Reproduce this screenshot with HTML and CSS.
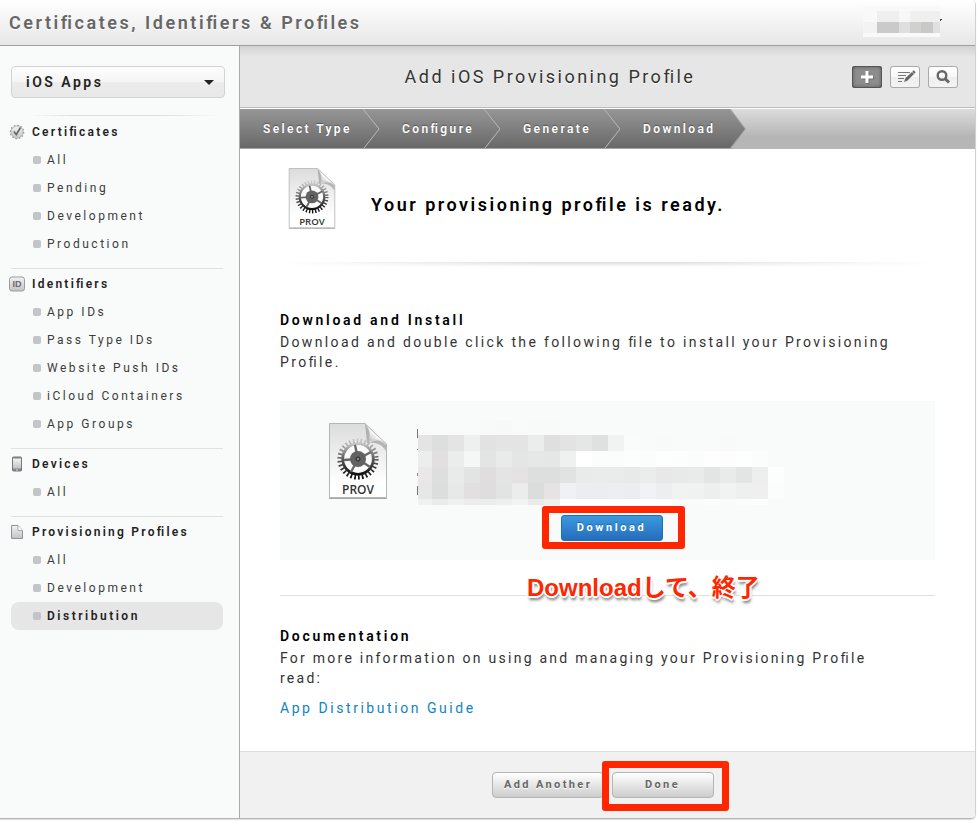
FILE: index.html
```html
<!DOCTYPE html>
<html lang="en">
<head>
<meta charset="utf-8">
<title>Certificates, Identifiers &amp; Profiles</title>
<link rel="stylesheet" href="styles.css">
</head>
<body>
<svg width="0" height="0" class="defs" aria-hidden="true">
  <defs>
    <linearGradient id="paper" x1="0" y1="0" x2="0" y2="1"><stop offset="0" stop-color="#dcdcdc"/><stop offset=".8" stop-color="#fff"/></linearGradient>
    <linearGradient id="metal" x1="0" y1="0" x2="0" y2="1"><stop offset="0" stop-color="#c4c4c4"/><stop offset=".45" stop-color="#666"/><stop offset="1" stop-color="#111"/></linearGradient>
    <linearGradient id="fold" x1="0" y1="1" x2="1" y2="0"><stop offset="0" stop-color="#999"/><stop offset=".5" stop-color="#fff"/></linearGradient>
    <linearGradient id="soft" x1="0" y1="0" x2="0" y2="1"><stop offset="0" stop-color="#f3f3f4"/><stop offset="1" stop-color="#c3c3c6"/></linearGradient>
    <symbol id="prov" viewBox="0 0 60 78">
      <path d="M1.5 1.5H37L58.500 22V75.500H1.500Z" fill="url(#paper)" stroke="#b4b4b4" stroke-width="1"/>
      <path d="M1 76.500H59" stroke="#aaa" stroke-width="1"/>
      <path d="M37 2C43 8 42 14 41 21C47 17 53 18 58 23V29C53 21 47 20 39 21Z" fill="#888" opacity=".55"/>
      <path d="M37 2C42 7 42 13 41 19C47 17 53 18 58 22Z" fill="url(#fold)" stroke="#bbb" stroke-width=".5"/>
      <circle cx="30" cy="37" r="18.300" fill="none" stroke="url(#metal)" stroke-width="4.600" stroke-dasharray="1.700 2.133"/>
      <circle cx="30" cy="37" r="15.300" fill="#fafafa" stroke="url(#metal)" stroke-width="2.800"/>
      <path d="M30 37L27 23M30 37L43 30M30 37L42 45M30 37L23 50M30 37L16 38" stroke="#666" stroke-width="2.300"/>
      <circle cx="30" cy="37" r="8" fill="#626262"/><circle cx="30" cy="37" r="2" fill="#888" stroke="#222"/>
      <text x="30" y="72" text-anchor="middle" class="prov-label">PROV</text>
    </symbol>
  </defs>
</svg>
<div class="app">
  <header class="top">
    <h1>Certi<i>f</i>icates, Identi<i>f</i>iers &amp; Pro<i>f</i>iles</h1>
    <svg class="account" width="80" height="34" viewBox="0 0 80 34" shape-rendering="crispEdges">
      <path d="M0 0H77V31H0Z" fill="#f9f9f9"/><path d="M14 5H77V16H14Z" fill="#efefef"/><path d="M36 5H47V16H36Z" fill="#f7f7f7"/>
      <path d="M0 16H14V27H0Z" fill="#f3f3f3"/><path d="M14 16H36V27H14Z" fill="#cacaca"/><path d="M36 16H47V27H36Z" fill="#dfdfdf"/><path d="M47 16H58V27H47Z" fill="#d0d0ce"/><path d="M58 16H70V27H58Z" fill="#c8c8c8"/><path d="M70 16H77V27H70Z" fill="#e0e0e0"/>
      <path d="M77 13H79V14H78V15H77Z" fill="#444"/>
    </svg>
  </header>
  <div class="body">
    <nav class="side">
      <div class="select"><span>iOS Apps</span><b class="caret"></b></div>
      <section class="first">
        <h2><svg width="16" height="16" viewBox="0 0 16 16"><circle cx="8" cy="8" r="6" fill="url(#soft)" stroke="#bbb"/><circle cx="8" cy="8" r="6.700" fill="none" stroke="#999" stroke-width="1.200" stroke-dasharray="1.700 1.800"/><path d="M4.800 7.500L7.300 10.500L11.500 3.500" fill="none" stroke="#666" stroke-width="1.600"/></svg><span>Certi<i>f</i>icates</span></h2>
        <ul><li>All</li><li>Pending</li><li>Development</li><li>Production</li></ul>
      </section>
      <section>
        <h2><svg width="16" height="16" viewBox="0 0 16 16"><rect x=".5" y="1" width="15" height="14" rx="2.500" fill="url(#soft)" stroke="#9b9b9f"/><text x="8" y="11" text-anchor="middle" class="id-label">ID</text></svg><span>Identi<i>f</i>iers</span></h2>
        <ul><li>App IDs</li><li>Pass Type IDs</li><li>Website Push IDs</li><li>iCloud Containers</li><li>App Groups</li></ul>
      </section>
      <section>
        <h2><svg width="16" height="16" viewBox="0 0 16 16"><rect x="3.500" y="1" width="9" height="14" rx="1" fill="#85858b" stroke="#77777d"/><path d="M4 2.500H12V12.500H4Z" fill="url(#soft)"/><path d="M7 14H9" stroke="#ddd"/></svg><span>Devices</span></h2>
        <ul><li>All</li></ul>
      </section>
      <section>
        <h2><svg width="16" height="16" viewBox="0 0 16 16"><path d="M2.500 1.500H9L13.500 6.500V14.500H2.500Z" fill="url(#soft)" stroke="#909096"/><path d="M9 1.500V6.500H13.500" fill="#fff" stroke="#aaa"/></svg><span>Provisioning Pro<i>f</i>iles</span></h2>
        <ul><li>All</li><li>Development</li><li class="on">Distribution</li></ul>
      </section>
    </nav>
    <main>
      <div class="title">
        <h2>Add iOS Provisioning Pro<i>f</i>ile</h2>
        <div class="tools">
          <button class="active" aria-label="Add"><svg width="30" height="22" viewBox="0 0 30 22"><path d="M15 5V17M9 11H21" stroke="#444" stroke-width="3" transform="translate(1 1)" opacity=".4"/><path d="M15 5V17M9 11H21" stroke="#fff" stroke-width="3"/></svg></button>
          <button aria-label="Edit"><svg width="30" height="22" viewBox="0 0 30 22"><path d="M8 6.500H20M8 9.500H16M8 12.500H14M8 15.500H12" stroke="#777"/><path d="M14 16L15.500 12L22 6L24 8L17.500 14.500Z" fill="#666"/><path d="M23 5L25 7" stroke="#666" stroke-width="2"/></svg></button>
          <button aria-label="Search"><svg width="30" height="22" viewBox="0 0 30 22"><circle cx="14" cy="9.500" r="4.300" fill="none" stroke="#666" stroke-width="2.400"/><path d="M17 12.500L21 16.500" stroke="#666" stroke-width="3"/></svg></button>
        </div>
      </div>
      <div class="steps">
        <svg class="step-bg" width="520" height="40" viewBox="0 0 520 40"><defs><linearGradient id="st" x1="0" y1="0" x2="0" y2="1"><stop offset="0" stop-color="#969696"/><stop offset="1" stop-color="#686868"/></linearGradient></defs><path d="M0 0H491L506 20L491 40H0Z" fill="#888" opacity=".4"/><path d="M0 0H490L505 20L490 39H0Z" fill="url(#st)"/><path d="M123 0L139 20L124 39M244 0L260 20L245 39M364 0L380 20L365 39" fill="none" stroke="#b9b9b9"/></svg>
        <ol><li class="s1">Select Type</li><li class="s2">Con<i>f</i>igure</li><li class="s3">Generate</li><li class="s4">Download</li></ol>
      </div>
      <div class="content">
        <div class="ready"><svg width="48" height="63"><use href="#prov"/></svg><h3>Your provisioning pro<i>f</i>ile is ready.</h3></div>
        <div class="fade"></div>
        <h4 class="h-install">Download and Install</h4>
        <p class="p-install">Download and double click the following <i>f</i>ile to install your Provisioning<br>Pro<i>f</i>ile.</p>
        <div class="card">
          <svg class="card-icon" width="60" height="78"><use href="#prov"/></svg>
          <div class="mosaic" id="mosaic"></div>
          <div class="callout dl"><button class="blue">Download</button></div>
        </div>
        <div class="rule"><span class="note">Download<span>して、終了</span></span></div>
        <h4 class="h-doc">Documentation</h4>
        <p class="p-doc">For more information on using and managing your Provisioning Pro<i>f</i>ile<br>read:</p>
        <a>App Distribution Guide</a>
      </div>
      <footer><button class="gray add">Add Another</button><div class="callout done"><button class="gray">Done</button></div></footer>
    </main>
  </div>
</div>
<script src="mosaic.js"></script>
</body>
</html>
```
FILE: mosaic.js
```js
// Pixelated profile details: each row is [height, colours]; cells are 16px wide after a 14px first cell.
const rows = [
  [15, "f9fafa f9fafa f9fafa f9fafa f8f9f9 f7f8f8 f9fafa f8f9f9 f8f9f9 f9fafa f9fafa f9fafa"],
  [16, "e4e4e4 dddfde e3e4e3 eeefef e1e2e1 e4e4e4 e4e4e4 ebecec e0dfdf e3e3e3 e5e6e6 dfe1e0 f1f3f2 fafbfb f9fbfa f8fafa f9fbfa f9fbfa f9fbfa f8faf9"],
  [16, "eceded e1dfdf ebecec f5f7f6 e3e4e4 e9ebea e4e5e5 e6e8e7 e5e7e6 eff1f0 ffffff fbfdfc fbfcfc fcfefd fbfcfc fdfefe fcfdfd fbfcfc fefefe fcfdfc fdfefe fbfdfc"],
  [16, "e9e7e7 dddfde e9ebea e2e3e3 dfdddd e3e4e3 e4e2e2 dddfde dddfde e1e3e2 e9eaea eaebeb eaebeb e8eaea ebecec e9e8e8 e8eaea e9eaea e3e5e5 e9eaea e3e5e5 edeeee fcfdfd"],
  [16, "e6e7e7 dcdedd e7e9e8 e1dfdf dfdddd e2e4e3 ebedec dbdddc e5e3e3 eff1f5 ecedf0 ecedf0 edeef1 ebedf0 f1f2f5 edeef0 f1f3f3 f0f1f1 edefee f1f3f2 eef0ef f0efef fbfcfc"],
  [6, "eff0f0 e9ebea eff1f0 ebeded ebeded eef0ef f2f4f3 e9ebea edefee ffffff ffffff ffffff ffffff ffffff ffffff ffffff f9fafa fafbfb fbfcfc fbfafa fbfcfc fcfdfd"]
];
const host = document.getElementById("mosaic");
for (const [h, colours] of rows) {
  const row = document.createElement("div");
  row.className = "mrow";
  row.style.height = h + "px";
  for (const c of colours.split(" ")) {
    const cell = document.createElement("span");
    cell.style.background = "#" + c;
    row.append(cell);
  }
  host.append(row);
}
```
FILE: styles.css
```css
* { box-sizing: border-box; }
html, body { margin: 0; height: 821px; overflow: hidden; background: #fff; }
body { font-family: Roboto, "Liberation Sans", sans-serif; color: #333; }
h1, h2, h3, h4, p, ul, ol { margin: 0; padding: 0; list-style: none; }
i { font-style: normal; letter-spacing: 0; }
button { font-family: inherit; padding: 0; }
.defs { position: absolute; }
.prov-label { font: 600 12px "Open Sans", sans-serif; fill: #333; letter-spacing: 0; }
.id-label { font: bold 9px "Liberation Sans", sans-serif; fill: #68686d; letter-spacing: 0; }
.app { width: 976px; height: 819px; display: flex; flex-direction: column; border-right: 1px solid #d0d0d0; border-bottom: 1px solid #b5b5b5; border-radius: 0 5px 5px 0; box-shadow: 0 1px 1px #ddd; overflow: hidden; }
.top { height: 46px; flex: none; display: flex; justify-content: space-between; background: linear-gradient(#fff, #e7e7e7); border-bottom: 1px solid #a0a0a0; padding: 0 32px 0 9px; }
.top h1 { font-size: 18px; line-height: 46px; font-weight: 600; color: #666; letter-spacing: 2.550px; text-shadow: 0 1px #fff; white-space: nowrap; }
.account { margin-top: 6px; }
.body { flex: 1; display: flex; min-height: 0; }
.side { width: 240px; flex: none; background: #f9fbfa; border-right: 1px solid #aaa; padding: 20px 16px 0 11px; }
.select { width: 214px; height: 32px; border: 1px solid #d3d3d3; border-radius: 4px; background: linear-gradient(#fdfdfd, #f5f5f5 50%, #ececec 50%, #e8e8e8); display: flex; align-items: center; justify-content: space-between; padding: 0 10px 0 14px; font-size: 14px; font-weight: 600; letter-spacing: 2.500px; color: #222; }
.caret { border: 5px solid transparent; border-top-color: #222; border-bottom: 0; }
section { border-top: 1px solid #e0e2e1; width: 212px; padding-bottom: 10px; }
section h2 { height: 29px; display: flex; align-items: center; margin-left: -2px; padding-top: 1px; gap: 7px; font-size: 12px; font-weight: 600; letter-spacing: 2.250px; color: #222; white-space: nowrap; }
.first { margin-top: 17px; border-top-color: transparent; border-image: linear-gradient(90deg, transparent 9%, #ddd 30%, #ddd 70%, transparent 98%) 1; }
.first h2 { height: 30px; }
.side li { height: 28px; display: flex; align-items: center; font-size: 12px; letter-spacing: 2.520px; color: #3b3b3b; padding-left: 22px; white-space: nowrap; border-radius: 8px; }
.side li::before { content: ""; width: 8px; height: 8px; border-radius: 2px; background: #c3c4c7; margin-right: 6px; }
.side li.on { background: #e6e6e6; font-weight: 600; color: #222; }
main { flex: 1; min-width: 0; display: flex; flex-direction: column; }
.title { height: 62px; flex: none; position: relative; display: flex; align-items: center; justify-content: center; background: linear-gradient(#d2d2d2, #e6e6e6 11px); border-bottom: 1px solid #bcbcbc; padding-right: 115px; }
.title h2 { font-size: 18px; font-weight: 400; letter-spacing: 2.480px; white-space: nowrap; text-shadow: 0 1px #fff; }
.tools { position: absolute; top: 20px; right: 17px; display: flex; gap: 8px; }
.tools button { width: 30px; height: 22px; border: 0; box-shadow: inset 0 0 0 1px #aaa; border-radius: 3px; background: linear-gradient(#fff, #f7f7f7 50%, #eee 50%, #f4f4f4); }
.tools .active { background: #8d8d8d; box-shadow: inset 0 0 0 1px #555, inset 0 0 4px #444; }
.tools svg { display: block; }
.steps { height: 41px; flex: none; border-top: 1px solid #fff; background: linear-gradient(#dcdcdc, #b5b5b5 70%, #b7b7b7); position: relative; }
.step-bg { position: absolute; left: 0; top: 0; }
.steps ol { position: relative; display: flex; height: 39px; align-items: center; padding-left: 23px; font-size: 12px; font-weight: 600; letter-spacing: 2.400px; color: #fff; text-shadow: 0 -1px 1px #555; white-space: nowrap; }
.s1 { width: 139px; }
.s2 { width: 121px; }
.s3 { width: 120px; }
.content { flex: 1; padding: 18px 40px 0; min-height: 0; }
.ready { display: flex; height: 63px; padding-left: 8px; gap: 35px; }
.ready h3 { font-size: 18px; line-height: 24px; margin-top: 26px; color: #000; font-weight: 600; letter-spacing: 2.500px; white-space: nowrap; }
.fade { height: 5px; margin-top: 32px; background: linear-gradient(#ddd, #fff); -webkit-mask-image: linear-gradient(90deg, transparent, #000 40%, #000 60%, transparent); mask-image: linear-gradient(90deg, transparent, #000 40%, #000 60%, transparent); }
h4 { font-size: 14px; line-height: 20px; font-weight: 600; color: #000; letter-spacing: 2.720px; }
.h-install { margin-top: 43px; }
p, a { font-size: 14px; line-height: 20px; letter-spacing: 2.350px; white-space: nowrap; }
p { margin-top: 2px; }
.p-doc { letter-spacing: 2.250px; }
.card { margin-top: 29px; width: 655px; height: 159px; background: #f9fbfa; position: relative; }
.card-icon { position: absolute; left: 48px; top: 21px; }
.mosaic { position: absolute; left: 138px; top: 19px; }
.mrow { display: flex; }
.mrow span { width: 16px; }
.mrow span:first-child { width: 14px; }
.mosaic::before { content: ""; position: absolute; left: -1px; top: 9px; width: 1px; height: 66px; background: linear-gradient(#777 9px, transparent 9px 20px, #888 20px 21px, transparent 21px 44px, #888 44px 47px, transparent 47px 57px, #777 57px); }
.callout { border: 7px solid #ff2600; border-radius: 3px; display: flex; align-items: center; justify-content: center; }
.dl { position: absolute; left: 262px; top: 105px; width: 143px; height: 43px; padding-right: 4px; }
.blue { width: 102px; height: 26px; border: 1px solid #1674b0; border-radius: 3px; background: linear-gradient(#3c99de, #256dbd); color: #fff; font-size: 11px; font-weight: 700; letter-spacing: 2.600px; padding-bottom: 1px; text-shadow: 0 -1px #1d67a8; }
.rule { margin-top: 35px; height: 1px; width: 655px; background: #e0e0e0; position: relative; }
.note { position: absolute; left: 247px; top: -21px; font: bold 24px/28px "Liberation Sans", "Noto Sans CJK JP", sans-serif; color: #ff2600; white-space: nowrap; text-shadow: 2px 0 #fff, -2px 0 #fff, 0 2px #fff, 0 -2px #fff, 1px 1px #fff, -1px 1px #fff, 1px -1px #fff, -1px -1px #fff, 1px 4px 3px #777; }
.h-doc { margin-top: 30px; }
a { display: block; color: #0e84c5; margin-top: 10px; letter-spacing: 2.550px; }
footer { height: 67px; flex: none; background: #f1f1f1; border-top: 1px solid #ddd; display: flex; padding-left: 252px; }
.gray { height: 26px; width: 102px; border: 1px solid #b4b4b4; border-radius: 4px; background: linear-gradient(#fff, #cdcdcd); font-size: 11px; font-weight: 700; letter-spacing: 2.380px; padding-bottom: 1px; color: #666; text-shadow: 0 1px #fff; white-space: nowrap; }
.add { width: 112px; margin-top: 20px; }
.done { width: 127px; height: 50px; margin: 9px 0 0 -2px; padding: 0 6px 2px 0; }
```
